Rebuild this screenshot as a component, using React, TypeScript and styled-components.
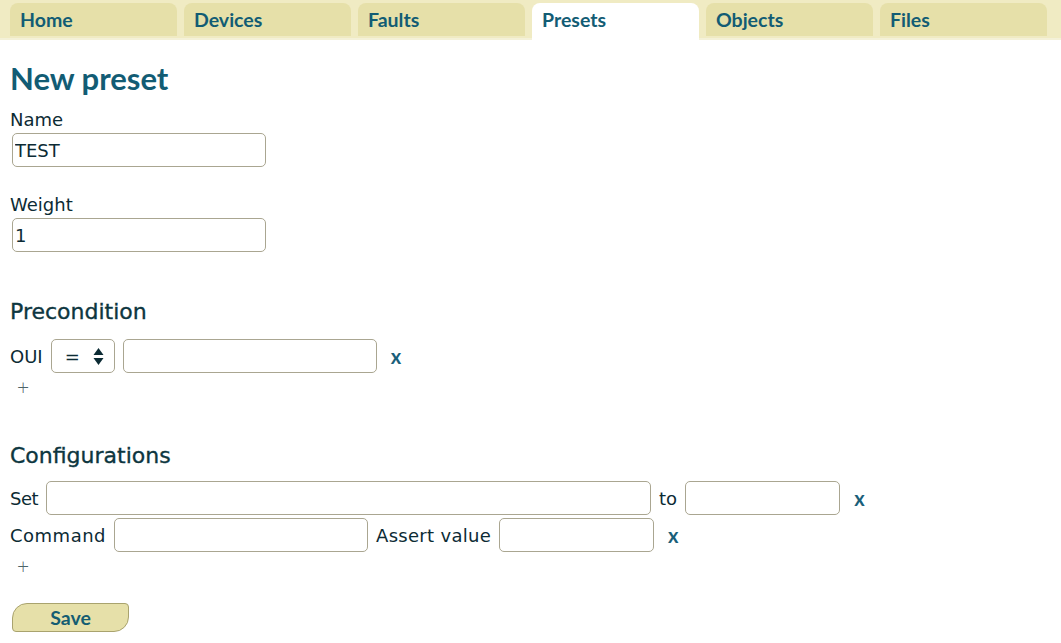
import React from "react";
import styled, { createGlobalStyle, css } from "styled-components";

const GlobalStyle = createGlobalStyle`
  body {
    margin: 0;
    background: #ffffff;
    font-family: "DejaVu Sans", Verdana, sans-serif;
    font-size: 18px;
    color: #0c2b34;
  }
`;

const boldFont = `Lato, "DejaVu Sans", sans-serif`;

const Nav = styled.nav`
  display: flex;
  gap: 7px;
  padding: 3px 0 2px 10px;
  background: #f0ebc3;
  border-bottom: 2px solid #f4f1d8;
`;

const Tab = styled.a<{ active?: boolean }>`
  display: block;
  width: 167px;
  height: 33px;
  box-sizing: border-box;
  padding-left: 10px;
  line-height: 33px;
  font-family: ${boldFont};
  font-size: 19.5px;
  font-weight: bold;
  color: #125c74;
  background: #e6e0a9;
  border-radius: 8px 8px 0 0;
  text-decoration: none;
  ${(p) =>
    p.active &&
    css`
      background: #ffffff;
      height: 37px;
      margin-bottom: -4px;
    `}
`;

const Page = styled.main`
  padding: 0 10px;
`;

const Title = styled.h1`
  margin: 20px 0 12px;
  font-family: ${boldFont};
  font-size: 31px;
  line-height: 36px;
  font-weight: bold;
  color: #125c74;
`;

const Field = styled.div<{ after?: number }>`
  display: flex;
  flex-direction: column;
  align-items: flex-start;
  margin-bottom: ${(p) => p.after ?? 26}px;
`;

const Label = styled.label`
  line-height: 23px;
  margin-bottom: 2px;
`;

const Input = styled.input<{ w: number }>`
  box-sizing: border-box;
  width: ${(p) => p.w}px;
  height: 34px;
  margin: 0;
  padding: 0 2px;
  border: 1px solid #aaa691;
  border-radius: 5px;
  font-family: inherit;
  font-size: 18px;
  color: #0c2b34;
  background: #ffffff;
  outline: none;
`;

const FieldInput = styled(Input)`
  margin-left: 2px;
`;

const Section = styled.h3<{ after?: number }>`
  margin: 45px 0 ${(p) => p.after ?? 15}px;
  font-size: 22px;
  line-height: 25px;
  font-weight: normal;
  color: #0d3640;
  -webkit-text-stroke: 0.35px #0d3640;
`;

const Rows = styled.div`
  display: flex;
  flex-direction: column;
  gap: 3px;
`;

const Row = styled.div`
  display: flex;
  align-items: center;
  gap: 8px;
`;

const Text = styled.span<{ spacing?: number }>`
  letter-spacing: ${(p) => p.spacing ?? 0}px;
`;

const Remove = styled.a`
  margin-left: 6px;
  font-family: ${boldFont};
  font-size: 20px;
  font-weight: bold;
  color: #1a5f7a;
  text-decoration: none;
`;

const Add = styled.a`
  display: block;
  margin: 2px 0 0 7px;
  font-family: ${boldFont};
  font-size: 21px;
  line-height: 23px;
  font-weight: 300;
  color: #4c6469;
  text-decoration: none;
`;

const SelectBox = styled.div`
  display: flex;
  align-items: center;
  box-sizing: border-box;
  width: 64px;
  height: 34px;
  padding: 0 10px 0 13px;
  border: 1px solid #aaa691;
  border-radius: 5px;
`;

const Select = styled.select`
  flex: 1;
  min-width: 0;
  appearance: none;
  border: none;
  background: transparent;
  font-family: inherit;
  font-size: 18px;
  color: #0c2b34;
  padding: 0;
  outline: none;
`;

const ArrowIcon = styled.svg`
  flex-shrink: 0;
  width: 11px;
  height: 19px;
`;

const SaveButton = styled.button`
  margin: 26px 0 0 2px;
  width: 117px;
  height: 29px;
  border: 1px solid #a9a36e;
  border-radius: 15px 4px 15px 4px;
  background: #e6e0a9;
  font-family: ${boldFont};
  font-size: 19.5px;
  font-weight: bold;
  color: #155d72;
  cursor: pointer;
`;

const Arrows = () => (
  <ArrowIcon viewBox="0 0 11 19">
    <path d="M5.5 1 L10.5 8 H0.5 Z" fill="#0c2b34" />
    <path d="M5.5 18 L10.5 11 H0.5 Z" fill="#0c2b34" />
  </ArrowIcon>
);

const tabs = ["Home", "Devices", "Faults", "Presets", "Objects", "Files"];

export default function App() {
  return (
    <>
      <GlobalStyle />
      <Nav>
        {tabs.map((t) => (
          <Tab key={t} active={t === "Presets"}>
            {t}
          </Tab>
        ))}
      </Nav>
      <Page>
        <Title>New preset</Title>
        <Field>
          <Label>Name</Label>
          <FieldInput w={254} defaultValue="TEST" />
        </Field>
        <Field after={47}>
          <Label>Weight</Label>
          <FieldInput w={254} defaultValue="1" />
        </Field>

        <Section>Precondition</Section>
        <Row>
          <Text>OUI</Text>
          <SelectBox>
            <Select defaultValue="=">
              <option>=</option>
              <option>&lt;&gt;</option>
            </Select>
            <Arrows />
          </SelectBox>
          <Input w={254} />
          <Remove>x</Remove>
        </Row>
        <Add>+</Add>

        <Section after={13}>Configurations</Section>
        <Rows>
          <Row>
            <Text spacing={-0.5}>Set</Text>
            <Input w={605} />
            <Text>to</Text>
            <Input w={155} />
            <Remove>x</Remove>
          </Row>
          <Row>
            <Text spacing={0.5}>Command</Text>
            <Input w={254} />
            <Text spacing={0.3}>Assert value</Text>
            <Input w={155} />
            <Remove>x</Remove>
          </Row>
        </Rows>
        <Add>+</Add>

        <SaveButton>Save</SaveButton>
      </Page>
    </>
  );
}
